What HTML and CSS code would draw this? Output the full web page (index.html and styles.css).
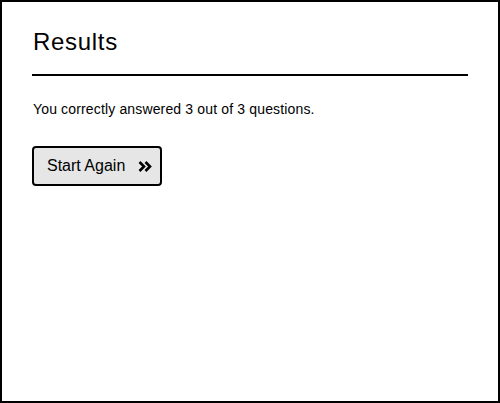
FILE: index.html
```html
<!DOCTYPE html>
<html>
<head>
<meta charset="utf-8">
<link rel="stylesheet" href="styles.css">
</head>
<body>
<div class="frame">
  <h1 class="title">Results</h1>
  <p class="summary">You correctly answered 3 out of 3 questions.</p>
  <button class="btn" type="button">
    <span class="btn-label">Start Again</span>
    <svg class="btn-icon" width="14" height="11" viewBox="0 0 14 11" aria-hidden="true">
      <path d="M1.5 1 L6 5.5 L1.5 10 M7.5 1 L12 5.5 L7.5 10" fill="none" stroke="#000" stroke-width="2.6" stroke-linejoin="miter"/>
    </svg>
  </button>
</div>
</body>
</html>
```
FILE: styles.css
```css
html, body {
  margin: 0;
  padding: 0;
  background: #fff;
}
body {
  font-family: "Liberation Sans", Arial, sans-serif;
  color: #000;
}
.frame {
  box-sizing: border-box;
  width: 500px;
  height: 403px;
  border: 2px solid #000;
  padding: 26px 30px 0 30px;
  display: flex;
  flex-direction: column;
  align-items: flex-start;
}
.title {
  align-self: stretch;
  margin: 0;
  padding-left: 1px;
  font-size: 24px;
  font-weight: normal;
  letter-spacing: 0.7px;
  line-height: 28px;
  padding-bottom: 18px;
  border-bottom: 2px solid #000;
}
.summary {
  margin: 26px 0 0 1px;
  font-size: 14px;
  letter-spacing: 0.15px;
  line-height: 15px;
}
.btn {
  margin-top: 29px;
  box-sizing: border-box;
  width: 130px;
  height: 40px;
  border: 2px solid #000;
  border-radius: 4px;
  background: #e6e6e6;
  display: flex;
  align-items: center;
  padding: 0 0 0 13px;
  font-family: "Liberation Sans", Arial, sans-serif;
  font-size: 16px;
  color: #000;
}
.btn-label {
  line-height: 18px;
}
.btn-icon {
  margin-left: 13px;
  display: block;
}
```
